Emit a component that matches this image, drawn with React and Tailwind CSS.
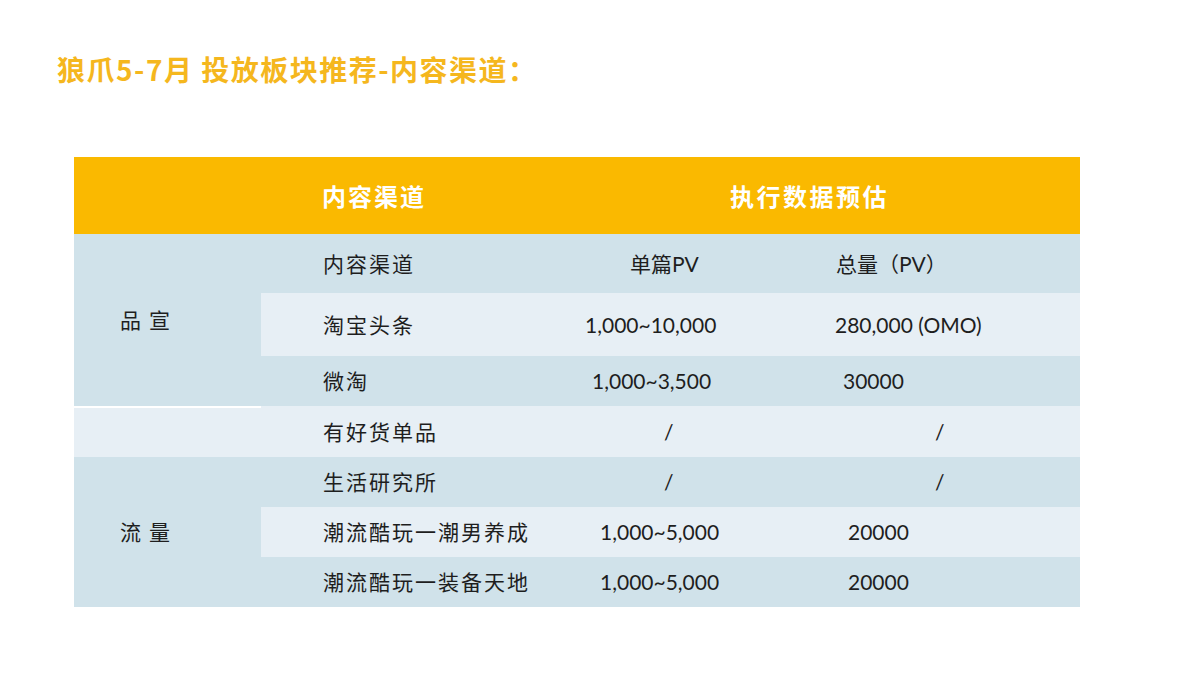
import React from "react";

const CJK = { fontFamily: '"Noto Sans CJK SC", sans-serif' };
const NUM = { fontFamily: 'Lato, "Noto Sans CJK SC", sans-serif' };

const DARK = "bg-[#d0e2ea]";
const LIGHT = "bg-[#e7eff5]";

const rows = [
  { name: "内容渠道", a: "单篇PV", apl: "pl-[70px]", b: "总量（PV）", bpl: "pl-[46px]", bg: "bg-[#d0e2ea] h-[59px]" },
  { name: "淘宝头条", a: "1,000~10,000", apl: "pl-[25px]", b: "280,000 (OMO)", bpl: "pl-[45px]", bg: "bg-[#e7eff5] h-[63px]" },
  { name: "微淘", a: "1,000~3,500", apl: "pl-[32px]", b: "30000", bpl: "pl-[53px]", bg: "bg-[#d0e2ea] h-[50px]" },
  { name: "有好货单品", a: "/", apl: "pl-[104px]", b: "/", bpl: "pl-[145px]", bg: "bg-[#e7eff5] h-[51px]" },
  { name: "生活研究所", a: "/", apl: "pl-[104px]", b: "/", bpl: "pl-[145px]", bg: "bg-[#d0e2ea] h-[50px]" },
  { name: "潮流酷玩一潮男养成", a: "1,000~5,000", apl: "pl-[40px]", b: "20000", bpl: "pl-[58px]", bg: "bg-[#e7eff5] h-[50px]" },
  { name: "潮流酷玩一装备天地", a: "1,000~5,000", apl: "pl-[40px]", b: "20000", bpl: "pl-[58px]", bg: "bg-[#d0e2ea] h-[50px]" },
];

export default function App() {
  return (
    <div className="w-[1200px] h-[675px] bg-white flex flex-col">
      <div
        className="pl-[57px] pt-[55px] h-[84px] text-[28px] leading-[28px] tracking-[1.5px] font-bold text-[#f5b71e] whitespace-nowrap"
        style={CJK}
      >
        狼爪5-7月 投放板块推荐-内容渠道：
      </div>

      <div className="ml-[74px] mt-[73px] w-[1006px] flex flex-col">
        <div className="h-[77px] bg-[#fab900] flex items-center text-white font-bold text-[24px] tracking-[2px]" style={CJK}>
          <div className="w-[486px] pl-[248px]">内容渠道</div>
          <div className="pl-[170px] tracking-[2.5px]">执行数据预估</div>
        </div>

        <div className="flex text-[#1e1e1e]">
          <div className="w-[187px] flex flex-col text-[21px] tracking-[8px]" style={CJK}>
            <div className={`h-[172px] ${DARK} flex items-center pl-[46px]`}>品宣</div>
            <div className={`h-[51px] ${LIGHT} border-t-2 border-white`}></div>
            <div className={`h-[150px] ${DARK} flex items-center pl-[46px]`}>流量</div>
          </div>

          <div className="w-[819px] flex flex-col">
            {rows.map((r, i) => (
              <div key={i} className={`flex items-center ${r.bg}`}>
                <div className="w-[299px] pl-[62px] text-[21px] tracking-[2px] whitespace-nowrap" style={CJK}>
                  {r.name}
                </div>
                <div className={`w-[230px] ${r.apl} text-[21px] whitespace-nowrap`} style={NUM}>
                  {r.a}
                </div>
                <div className={`w-[290px] ${r.bpl} text-[21px] whitespace-nowrap`} style={NUM}>
                  {r.b}
                </div>
              </div>
            ))}
          </div>
        </div>
      </div>
    </div>
  );
}
